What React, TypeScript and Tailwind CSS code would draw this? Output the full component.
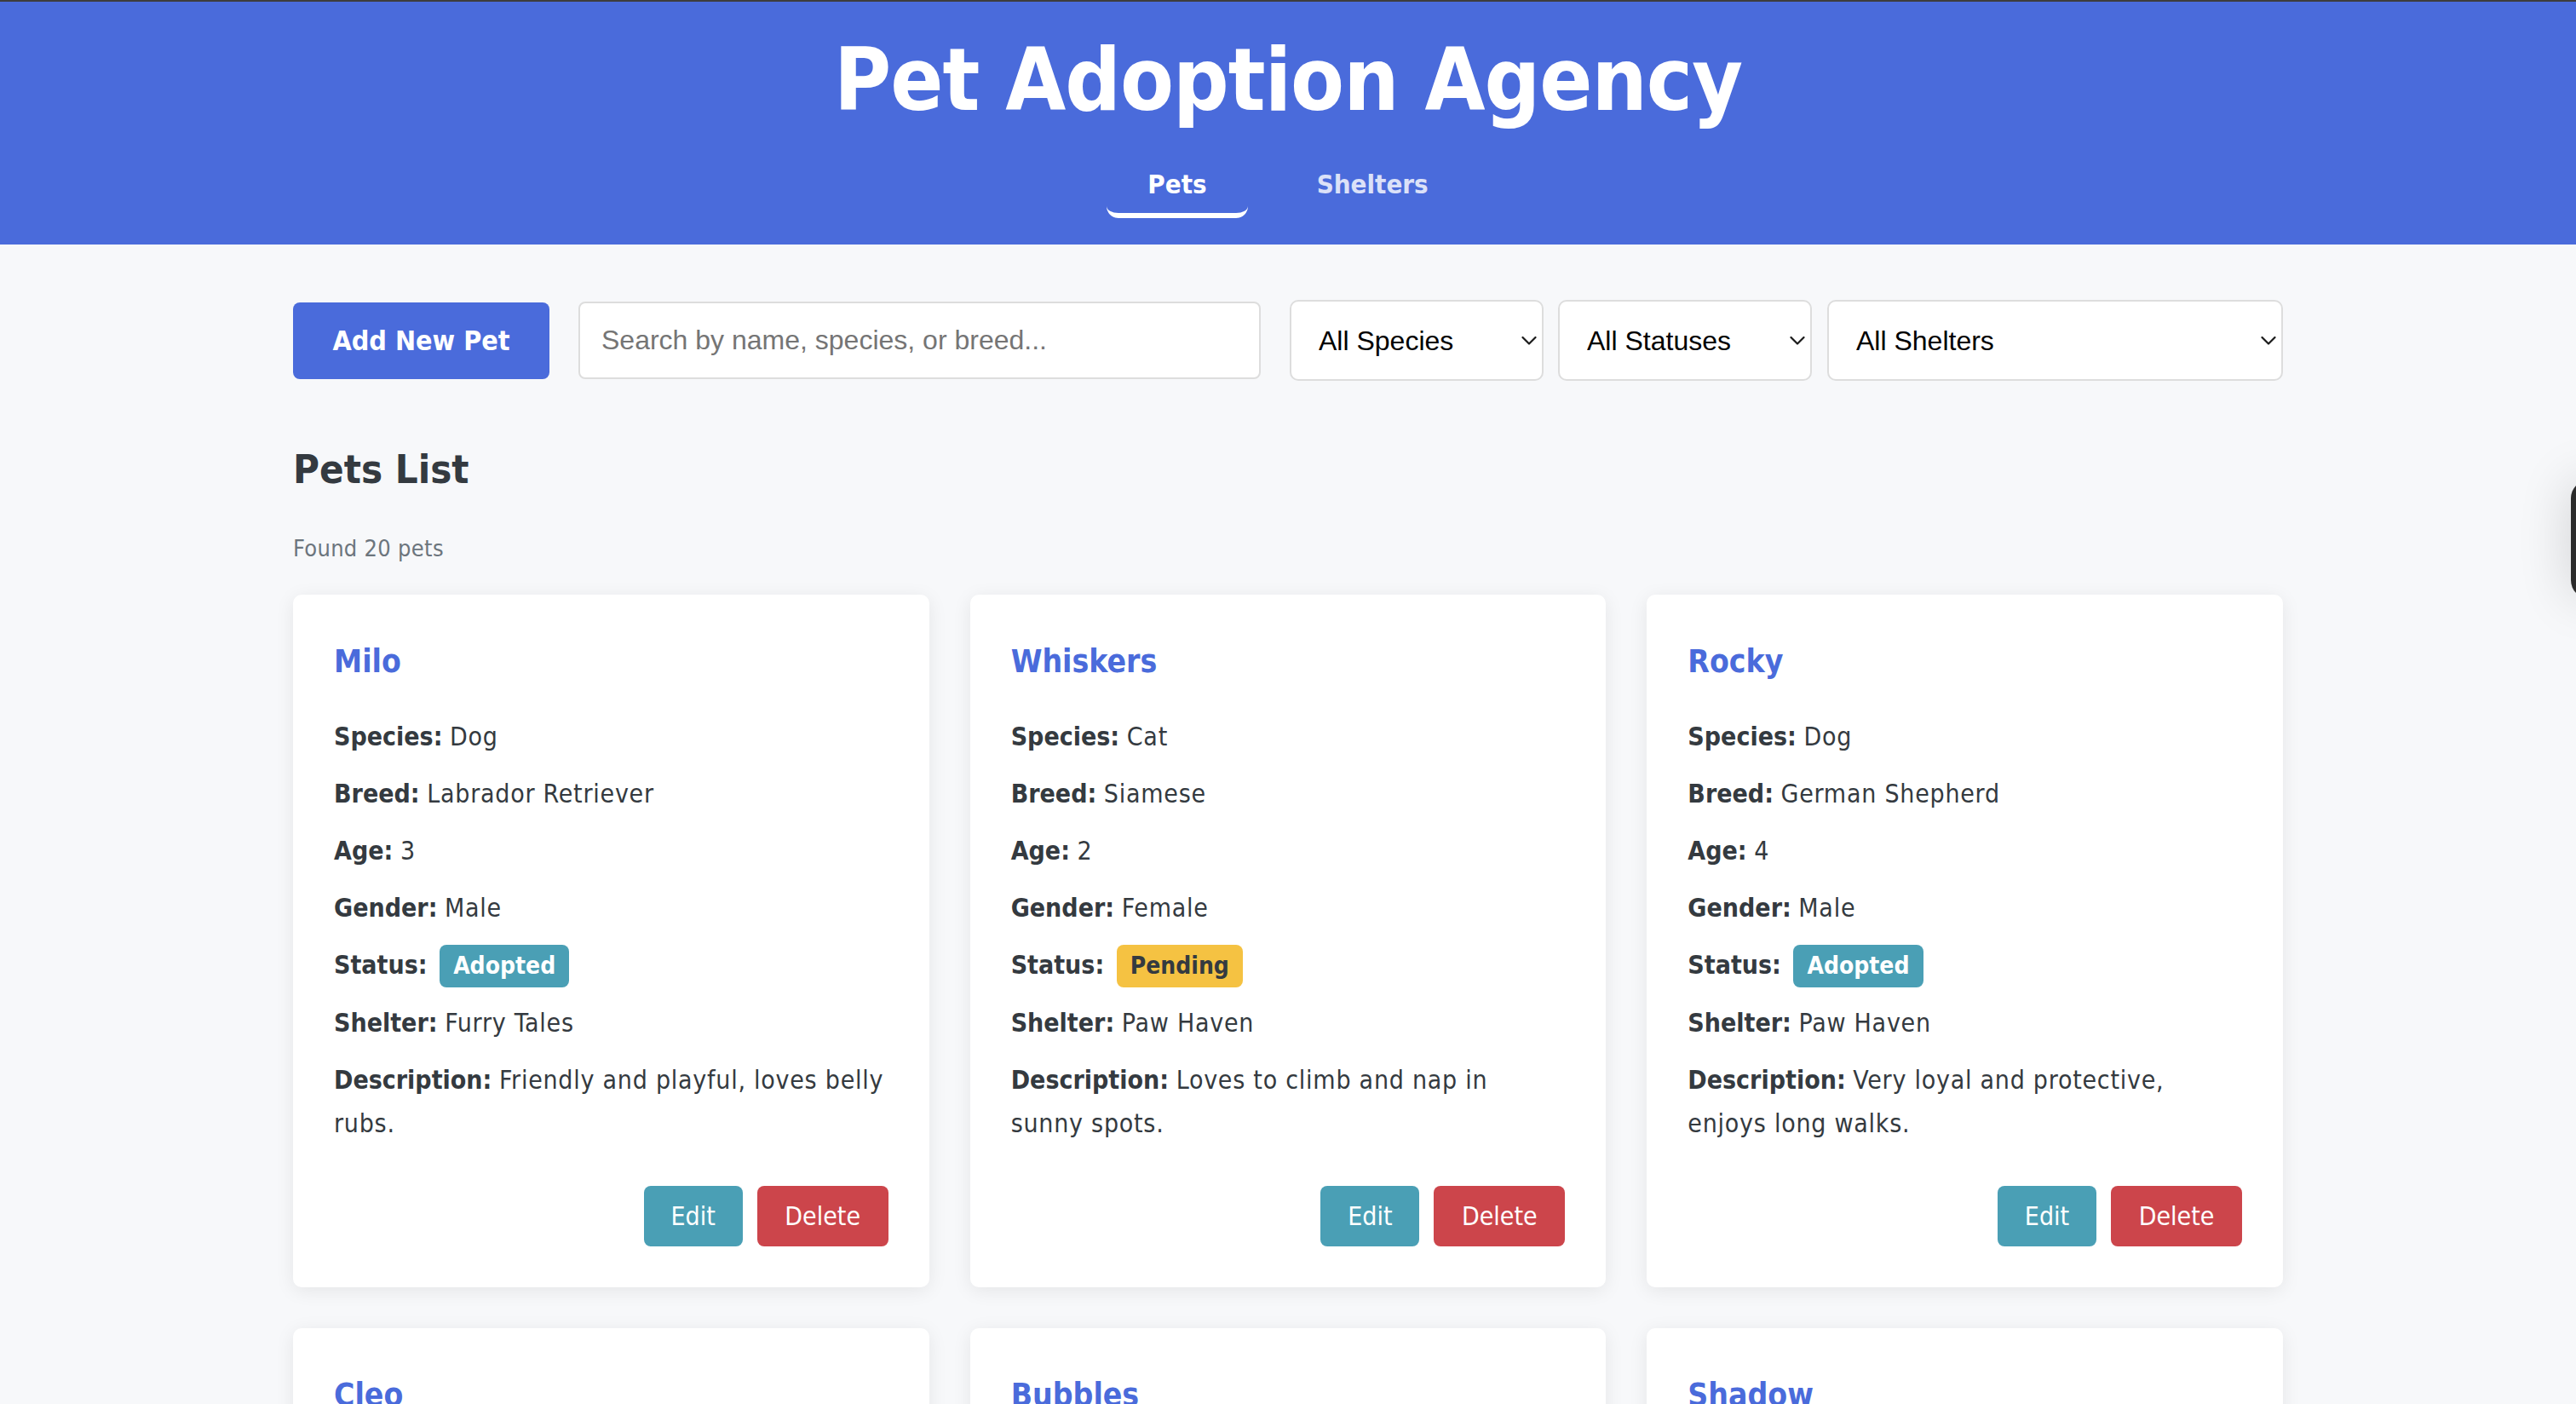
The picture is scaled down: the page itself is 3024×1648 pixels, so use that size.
import React from "react";

type Pet = {
  name: string;
  species: string;
  breed: string;
  age: number;
  gender: string;
  status: "Adopted" | "Pending" | "Available";
  shelter: string;
  description: string;
};

const pets: Pet[] = [
  { name: "Milo", species: "Dog", breed: "Labrador Retriever", age: 3, gender: "Male", status: "Adopted", shelter: "Furry Tales", description: "Friendly and playful, loves belly rubs." },
  { name: "Whiskers", species: "Cat", breed: "Siamese", age: 2, gender: "Female", status: "Pending", shelter: "Paw Haven", description: "Loves to climb and nap in sunny spots." },
  { name: "Rocky", species: "Dog", breed: "German Shepherd", age: 4, gender: "Male", status: "Adopted", shelter: "Paw Haven", description: "Very loyal and protective, enjoys long walks." },
  { name: "Cleo", species: "Cat", breed: "Persian", age: 5, gender: "Female", status: "Available", shelter: "Furry Tales", description: "Calm and affectionate, enjoys quiet evenings." },
  { name: "Bubbles", species: "Fish", breed: "Goldfish", age: 1, gender: "Male", status: "Available", shelter: "Happy Tails", description: "Swims happily and loves colorful tanks." },
  { name: "Shadow", species: "Cat", breed: "Bombay", age: 3, gender: "Male", status: "Pending", shelter: "Paw Haven", description: "Curious and gentle, likes to hide in boxes." },
];

const bodyFont = { fontFamily: '"DejaVu Sans Condensed", "DejaVu Sans", Verdana, sans-serif' };
const formFont = { fontFamily: '"Liberation Sans", Arial, sans-serif' };

function Badge({ status }: { status: Pet["status"] }) {
  if (status === "Pending") {
    return (
      <span className="ml-[6px] inline-block rounded-[8px] bg-[#f5c242] px-[16px] py-[8px] text-[28px] font-bold leading-[34px] text-[#343a40]">
        {status}
      </span>
    );
  }
  if (status === "Available") {
    return (
      <span className="ml-[6px] inline-block rounded-[8px] bg-[#4caf7d] px-[16px] py-[8px] text-[28px] font-bold leading-[34px] text-white">
        {status}
      </span>
    );
  }
  return (
    <span className="ml-[6px] inline-block rounded-[8px] bg-[#4a9fb5] px-[16px] py-[8px] text-[28px] font-bold leading-[34px] text-white">
      {status}
    </span>
  );
}

function Row({ label, value, children }: { label: string; value?: string | number; children?: React.ReactNode }) {
  return (
    <p className="mb-[16px] text-[30px] leading-[51px] text-[#343a40]">
      <strong className="font-bold">{label}:</strong>{" "}
      {value !== undefined ? <span className="tracking-[0.75px]">{value}</span> : children}
    </p>
  );
}

function PetCard({ pet }: { pet: Pet }) {
  return (
    <div className="flex flex-col rounded-[10px] bg-white p-[48px] shadow-[0_4px_22px_rgba(0,0,0,0.08)]">
      <h3 className="text-[37px] font-bold leading-[62px] text-[#4a6bdb]">{pet.name}</h3>
      <div className="mt-[31px]">
        <Row label="Species" value={pet.species} />
        <Row label="Breed" value={pet.breed} />
        <Row label="Age" value={pet.age} />
        <Row label="Gender" value={pet.gender} />
        <Row label="Status">
          <Badge status={pet.status} />
        </Row>
        <Row label="Shelter" value={pet.shelter} />
        <Row label="Description" value={pet.description} />
      </div>
      <div className="mt-auto flex justify-end gap-[17px] pt-[32px]">
        <button className="h-[71px] w-[116px] rounded-[8px] bg-[#4a9fb5] text-[30px] text-white">Edit</button>
        <button className="h-[71px] w-[154px] rounded-[8px] bg-[#cc454b] text-[30px] text-white">Delete</button>
      </div>
    </div>
  );
}

function Chevron() {
  return (
    <svg
      className="pointer-events-none absolute right-[8px] top-1/2 -translate-y-1/2"
      width="18"
      height="11"
      viewBox="0 0 18 11"
      fill="none"
    >
      <path d="M1.5 1.5 L9 9 L16.5 1.5" stroke="#1a1a1a" strokeWidth="2.2" strokeLinecap="round" strokeLinejoin="round" />
    </svg>
  );
}

function FakeSelect({ label, className }: { label: string; className: string }) {
  return (
    <div className={"relative h-[95px] " + className}>
      <select
        className="h-full w-full appearance-none rounded-[10px] border-2 border-[#dddddd] bg-white pl-[32px] pr-[40px] text-[32px] text-black outline-none"
        style={formFont}
        defaultValue={label}
      >
        <option>{label}</option>
      </select>
      <Chevron />
    </div>
  );
}

export default function App() {
  return (
    <div className="relative h-screen w-full overflow-hidden bg-[#f7f8fa]" style={bodyFont}>
      <div className="h-[2px] bg-[#3d3d3d]" />
      <header className="bg-[#4a6bdb] pb-[31px] pt-[41px] text-center">
        <h1 className="text-[102px] font-bold leading-[102px] tracking-[-1px] text-white">Pet Adoption Agency</h1>
        <nav className="mt-[38px] flex justify-center gap-[33px]">
          <button className="rounded-[14px] border-b-[6px] border-white px-[48px] pb-[15px] pt-[15px] text-[31px] font-bold leading-[37px] text-white">
            Pets
          </button>
          <button className="rounded-[14px] border-b-[6px] border-transparent px-[48px] pb-[15px] pt-[15px] text-[31px] font-bold leading-[37px] text-white/80">
            Shelters
          </button>
        </nav>
      </header>

      <main className="mx-auto w-[2336px] pt-[65px]">
        <div className="flex h-[95px] items-center">
          <button className="h-[90px] w-[301px] shrink-0 rounded-[8px] bg-[#4a6bdb] text-[32px] font-bold text-white">
            Add New Pet
          </button>
          <input
            className="ml-[34px] h-[91px] w-[801px] shrink-0 rounded-[8px] border-2 border-[#dddddd] bg-white px-[25px] text-[32px] text-black outline-none placeholder:text-[#757575]"
            style={formFont}
            placeholder="Search by name, species, or breed..."
          />
          <FakeSelect label="All Species" className="ml-[34px] w-[298px] shrink-0" />
          <FakeSelect label="All Statuses" className="ml-[17px] w-[298px] shrink-0" />
          <FakeSelect label="All Shelters" className="ml-[18px] flex-1" />
        </div>

        <h2 className="mt-[76px] text-[47px] font-bold leading-[56px] text-[#343a40]">Pets List</h2>
        <p className="mt-[49px] text-[27px] leading-[32px] tracking-[0.3px] text-[#6c757d]">Found 20 pets</p>

        <div className="mt-[38px] grid grid-cols-3 gap-[48px]">
          {pets.map((p) => (
            <PetCard key={p.name} pet={p} />
          ))}
        </div>
      </main>

      <div className="absolute left-[3018px] top-[563px] h-[140px] w-[40px] rounded-l-[22px] bg-[#2b2b2b] shadow-[0_0_60px_rgba(0,0,0,0.18)]" />
    </div>
  );
}
